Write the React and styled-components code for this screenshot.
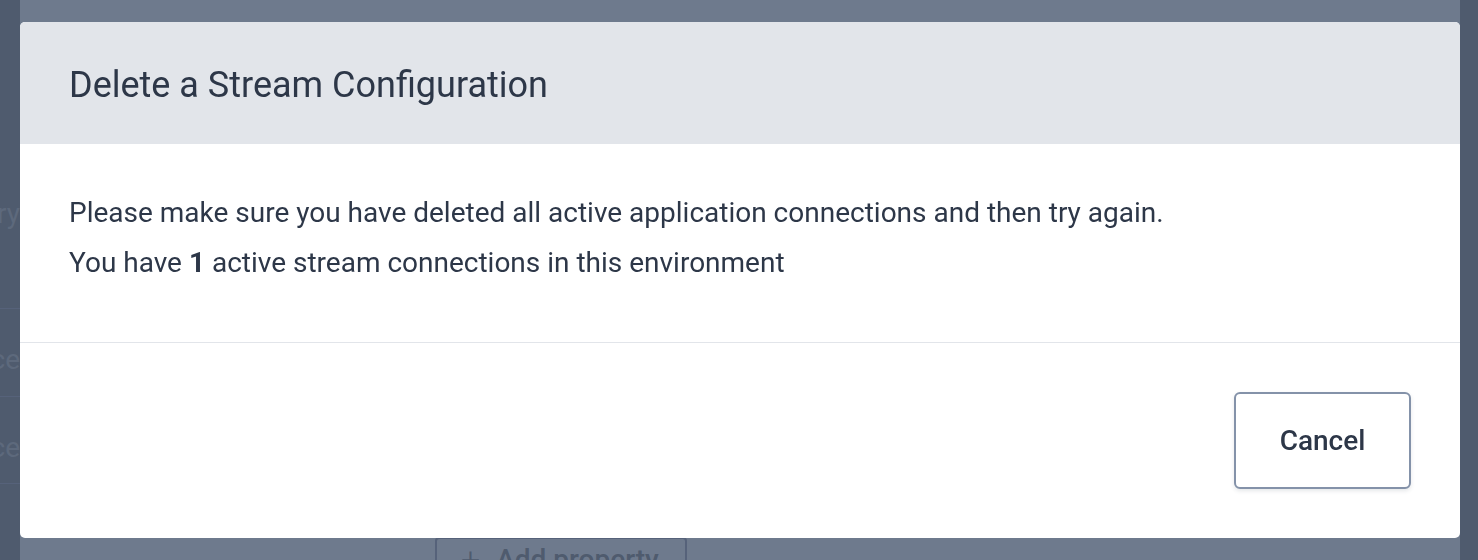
import styled, { createGlobalStyle } from 'styled-components';

const GlobalStyle = createGlobalStyle`
  html, body {
    margin: 0;
    padding: 0;
    background: #4f5b6e;
    font-family: Roboto, "Liberation Sans", sans-serif;
  }
`;

const Page = styled.div`
  display: flex;
  width: 1478px;
  height: 560px;
  overflow: hidden;
  background: #4f5b6e;
`;

const SideStrip = styled.div`
  width: ${({ w }) => w}px;
  flex-shrink: 0;
  display: flex;
  flex-direction: column;
  align-items: flex-end;
  padding-top: 190px;
  overflow: hidden;
`;

const FadedLabel = styled.div`
  height: ${({ h }) => h}px;
  box-sizing: border-box;
  padding-top: ${({ pt }) => pt || 0}px;
  display: flex;
  align-items: center;
  font-size: 28px;
  color: #5d697c;
  white-space: nowrap;
  border-bottom: ${({ line }) => (line ? '1px solid #56627a' : 'none')};
  width: 100%;
  justify-content: flex-end;
`;

const Main = styled.div`
  flex: 1;
  background: #6e7a8d;
  display: flex;
  flex-direction: column;
  justify-content: flex-end;
  padding-left: 415px;
`;

const AddProperty = styled.div`
  box-sizing: border-box;
  width: 252px;
  height: 44px;
  margin-bottom: -21px;
  border: 2px solid #56627a;
  border-radius: 4px;
  display: flex;
  align-items: center;
  gap: 16px;
  padding-left: 24px;
  font-size: 28px;
  font-weight: 500;
  color: #4f5b6e;
`;

const Plus = styled.span`
  font-size: 34px;
  font-weight: 300;
`;

const Modal = styled.div`
  position: fixed;
  top: 22px;
  left: 20px;
  width: 1440px;
  height: 516px;
  background: #ffffff;
  border-radius: 5px;
  overflow: hidden;
  display: flex;
  flex-direction: column;
  color: #2d3748;
`;

const Header = styled.div`
  box-sizing: border-box;
  height: 122px;
  flex-shrink: 0;
  background: #e2e5ea;
  display: flex;
  align-items: center;
  padding: 4px 49px 0;
  font-size: 36px;
  font-weight: 400;
`;

const Body = styled.div`
  height: 199px;
  flex-shrink: 0;
  box-sizing: border-box;
  padding: 49px 49px 0;
  border-bottom: 1px solid #e2e5ea;
`;

const Line = styled.p`
  margin: 0 0 10px;
  font-size: 28px;
  line-height: 40px;
  b {
    font-weight: 700;
  }
`;

const Footer = styled.div`
  flex: 1;
  display: flex;
  justify-content: flex-end;
  align-items: center;
  padding: 0 49px;
`;

const Button = styled.button`
  width: 177px;
  height: 97px;
  background: #fff;
  border: 2px solid #8492a9;
  border-radius: 6px;
  box-shadow: 0 2px 4px rgba(45, 55, 72, 0.12);
  font-family: Roboto, "Liberation Sans", sans-serif;
  font-size: 28px;
  font-weight: 500;
  color: #2d3748;
  cursor: pointer;
`;

export default function App() {
  return (
    <>
      <GlobalStyle />
      <Page>
        <SideStrip w={20}>
          <FadedLabel h={46}>ry</FadedLabel>
          <FadedLabel h={73} line />
          <FadedLabel h={88} pt={14} line>ce</FadedLabel>
          <FadedLabel h={87} pt={14} line>ce</FadedLabel>
        </SideStrip>
        <Main>
          <AddProperty>
            <Plus>+</Plus>
            <span>Add property</span>
          </AddProperty>
        </Main>
        <SideStrip w={18} />
      </Page>
      <Modal>
        <Header>Delete a Stream Configuration</Header>
        <Body>
          <Line>Please make sure you have deleted all active application connections and then try again.</Line>
          <Line>
            You have <b>1</b> active stream connections in this environment
          </Line>
        </Body>
        <Footer>
          <Button>Cancel</Button>
        </Footer>
      </Modal>
    </>
  );
}
